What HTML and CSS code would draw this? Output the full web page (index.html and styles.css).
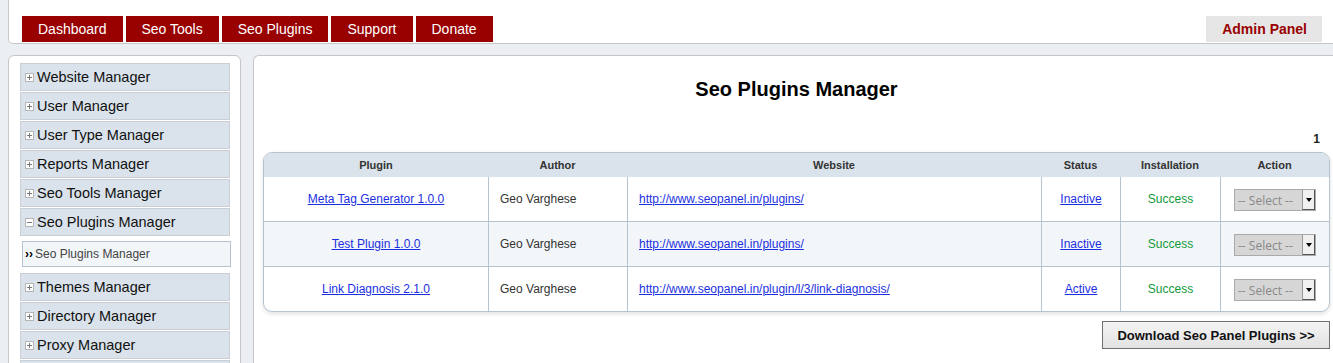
FILE: index.html
```html
<!DOCTYPE html>
<html lang="en">
<head>
    <meta charset="UTF-8">
    <title>Seo Panel - Seo Plugins Manager</title>
    <link rel="stylesheet" href="styles.css">
</head>
<body>

    <div class="header">
        <ul class="topmenu">
            <li><a href="#">Dashboard</a></li>
            <li><a href="#">Seo Tools</a></li>
            <li><a href="#">Seo Plugins</a></li>
            <li><a href="#">Support</a></li>
            <li><a href="#">Donate</a></li>
        </ul>
        <a class="admin-link" href="#">Admin Panel</a>
    </div>

    <div class="page">
        <div class="sidebar">
            <div class="menu-item"><span class="toggle"></span>Website Manager</div>
            <div class="menu-item"><span class="toggle"></span>User Manager</div>
            <div class="menu-item"><span class="toggle"></span>User Type Manager</div>
            <div class="menu-item"><span class="toggle"></span>Reports Manager</div>
            <div class="menu-item"><span class="toggle"></span>Seo Tools Manager</div>
            <div class="menu-item open"><span class="toggle"></span>Seo Plugins Manager</div>
            <div class="submenu"><span class="arrows">&rsaquo;&rsaquo;</span>Seo Plugins Manager</div>
            <div class="menu-item"><span class="toggle"></span>Themes Manager</div>
            <div class="menu-item"><span class="toggle"></span>Directory Manager</div>
            <div class="menu-item"><span class="toggle"></span>Proxy Manager</div>
            <div class="menu-item"></div>
        </div>

        <div class="content">
            <h1>Seo Plugins Manager</h1>
            <div class="pager">1</div>

            <table class="list">
                <thead>
                    <tr>
                        <th class="c-plugin">Plugin</th>
                        <th class="c-author">Author</th>
                        <th class="c-site">Website</th>
                        <th class="c-status">Status</th>
                        <th class="c-install">Installation</th>
                        <th class="c-action">Action</th>
                    </tr>
                </thead>
                <tbody>
                    <tr>
                        <td class="center"><a href="#">Meta Tag Generator 1.0.0</a></td>
                        <td>Geo Varghese</td>
                        <td><a href="#">http://www.seopanel.in/plugins/</a></td>
                        <td class="center"><a href="#">Inactive</a></td>
                        <td class="center success">Success</td>
                        <td class="center"><span class="select">-- Select --<span class="drop"></span></span></td>
                    </tr>
                    <tr class="alt">
                        <td class="center"><a href="#">Test Plugin 1.0.0</a></td>
                        <td>Geo Varghese</td>
                        <td><a href="#">http://www.seopanel.in/plugins/</a></td>
                        <td class="center"><a href="#">Inactive</a></td>
                        <td class="center success">Success</td>
                        <td class="center"><span class="select">-- Select --<span class="drop"></span></span></td>
                    </tr>
                    <tr>
                        <td class="center"><a href="#">Link Diagnosis 2.1.0</a></td>
                        <td>Geo Varghese</td>
                        <td><a href="#">http://www.seopanel.in/plugin/l/3/link-diagnosis/</a></td>
                        <td class="center"><a href="#">Active</a></td>
                        <td class="center success">Success</td>
                        <td class="center"><span class="select">-- Select --<span class="drop"></span></span></td>
                    </tr>
                </tbody>
            </table>

            <div class="actions">
                <button type="button">Download Seo Panel Plugins &gt;&gt;</button>
            </div>
        </div>
    </div>

</body>
</html>
```

FILE: styles.css
```css
body {
    font-family: "Liberation Sans", Arial, sans-serif;
    background-color: #ebeef2;
    margin: 0;
    overflow: hidden;
}
a {
    color: #1c2fe0;
}
.header {
    display: flex;
    justify-content: space-between;
    align-items: flex-end;
    height: 44px;
    margin-left: 8px;
    margin-right: -10px;
    background-color: #fff;
    border: 1px solid #c6c6c6;
    border-top: none;
    border-radius: 0 0 0 5px;
    padding: 0 20px 1px 13px;
    box-sizing: border-box;
}
.topmenu {
    display: flex;
    gap: 3px;
    list-style: none;
    margin: 0;
    padding: 0;
}
.topmenu a {
    display: block;
    background-color: #990000;
    color: #fff;
    text-decoration: none;
    font-size: 14px;
    line-height: 26px;
    padding: 0 16px;
}
.admin-link {
    display: block;
    background-color: #e6e6e6;
    color: #990000;
    font-weight: bold;
    font-size: 14px;
    line-height: 26px;
    padding: 0 15px 0 16px;
    text-decoration: none;
}
.page {
    display: flex;
    gap: 12px;
    margin: 11px 0 0 8px;
}
.sidebar {
    flex: 0 0 233px;
    height: 320px;
    background-color: #fff;
    border: 1px solid #c6c6c6;
    border-radius: 6px;
    padding: 7px 10px 0 11px;
    box-sizing: border-box;
    display: flex;
    flex-direction: column;
    gap: 1px;
}
.menu-item {
    display: flex;
    align-items: center;
    height: 28px;
    box-sizing: border-box;
    background-color: #dae3eb;
    border: 1px solid #cbcfd3;
    font-size: 14.5px;
    color: #111;
    padding-left: 4px;
    flex-shrink: 0;
}
.toggle {
    position: relative;
    width: 7px;
    height: 7px;
    border: 1px solid #b5b5b5;
    background-color: #fff;
    margin-right: 3px;
}
.toggle::before,
.toggle::after {
    content: "";
    position: absolute;
    background-color: #777;
}
.toggle::before {
    left: 1px;
    top: 3px;
    width: 5px;
    height: 1px;
}
.toggle::after {
    left: 3px;
    top: 1px;
    width: 1px;
    height: 5px;
}
.open .toggle::after {
    display: none;
}
.submenu {
    display: flex;
    align-items: center;
    height: 26px;
    box-sizing: border-box;
    margin: 4px -1px 5px 2px;
    background-color: #f2f6f9;
    border: 1px solid #b4c3cf;
    font-size: 12px;
    color: #444;
    padding-left: 2px;
    flex-shrink: 0;
}
.arrows {
    color: #000;
    font-weight: bold;
    margin-right: 2px;
}
.content {
    flex: 1;
    height: 320px;
    background-color: #fff;
    border: 1px solid #c6c6c6;
    border-right: none;
    border-radius: 6px 0 0 0;
    padding: 0 3px 0 9px;
}
h1 {
    text-align: center;
    font-size: 20px;
    margin: 21px 0 0 0;
    line-height: 24px;
    color: #000;
}
.pager {
    text-align: right;
    font-weight: bold;
    font-size: 12px;
    color: #222;
    margin: 31px 10px 0 0;
    line-height: 14px;
}
.list {
    width: 1067px;
    border-collapse: separate;
    border-spacing: 0;
    border: 1px solid #b4c3cf;
    border-radius: 9px;
    margin: 6px 0 0 0;
    font-size: 12px;
    box-shadow: 0 2px 4px rgba(0, 0, 0, 0.12);
    overflow: hidden;
}
.list th {
    background-color: #dae3eb;
    color: #333;
    font-size: 11px;
    height: 24px;
    padding: 0;
}
.list td {
    height: 44px;
    padding: 0 11px;
    color: #333;
    border-left: 1px solid #b4c3cf;
    border-top: 1px solid #b4c3cf;
}
.list td:first-child {
    border-left: none;
}
.list tbody tr:first-child td {
    border-top: none;
}
.list tr.alt td {
    background-color: #f2f6f9;
}
.c-plugin { width: 224px; }
.c-author { width: 139px; }
.c-site { width: 414px; }
.c-status { width: 79px; }
.c-install { width: 100px; }
.center {
    text-align: center;
}
.list td.success {
    color: #129a3a;
}
.select {
    display: inline-flex;
    align-items: center;
    width: 82px;
    height: 22px;
    box-sizing: border-box;
    background-color: #d6d6d6;
    border: 1px solid #aaa;
    color: #888;
    font-family: "Open Sans", sans-serif;
    font-size: 12px;
    padding-left: 3px;
    position: relative;
    vertical-align: middle;
    margin-top: 2px;
    white-space: nowrap;
}
.drop {
    position: absolute;
    right: 0;
    top: 0;
    bottom: 0;
    width: 13px;
    background-color: #f0f0f0;
    border-left: 1px solid #999;
    border-right: 1px solid #555;
    border-bottom: 1px solid #555;
    box-sizing: border-box;
}
.drop::after {
    content: "";
    position: absolute;
    left: 3px;
    top: 8px;
    border-left: 3px solid transparent;
    border-right: 3px solid transparent;
    border-top: 4px solid #000;
}
.actions {
    display: flex;
    justify-content: flex-end;
    width: 1067px;
    margin-top: 9px;
}
button {
    font-family: "Liberation Sans", Arial, sans-serif;
    font-weight: bold;
    font-size: 13px;
    color: #111;
    background: linear-gradient(#f4f4f4, #e2e2e2);
    border: 1px solid #707070;
    width: 228px;
    height: 28px;
    padding: 0;
}
```
